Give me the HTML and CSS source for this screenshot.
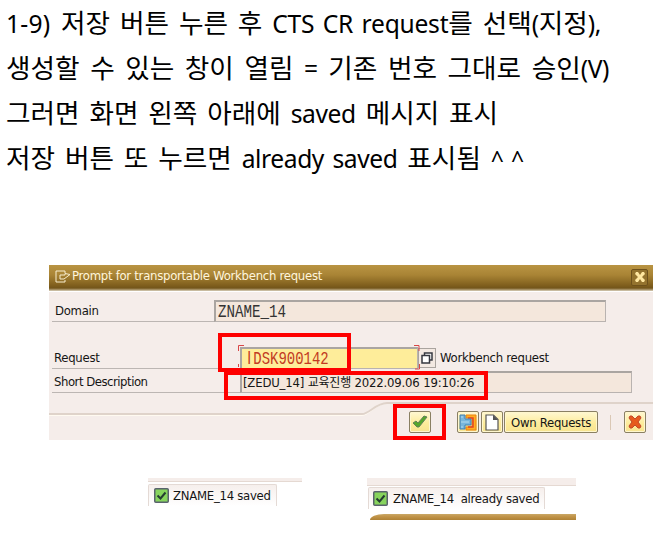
FILE: index.html
```html
<!DOCTYPE html>
<html lang="ko">
<head>
<meta charset="utf-8">
<title>CTS request</title>
<link rel="stylesheet" href="styles.css">
</head>
<body>
<main class="page">
  <section class="notes">
    <p><span class="lat num">1-9)</span> 저장 버튼 누른 후 <span class="lat caps">CTS CR request</span>를 선택<span class="lat">(</span>지정<span class="lat">),</span></p>
    <p class="wide">생성할 수 있는 창이 열림 <span class="lat">=</span> 기존 번호 그대로 승인<span class="lat">(V)</span></p>
    <p>그러면 화면 왼쪽 아래에 <span class="lat">saved</span> 메시지 표시</p>
    <p>저장 버튼 또 누르면 <span class="lat">already saved</span> 표시됨 <span class="lat carets">^^</span></p>
  </section>

  <section class="dialog">
    <header class="titlebar">
      <svg class="title-icon" width="16" height="13" viewBox="0 0 16 13"><path d="M10 3V1H1v11h9v-2M5 5h5V3.500L15 4.500 9 9H5z" fill="none" stroke="#f7edce"/></svg>
      <h1>Prompt for transportable Workbench request</h1>
      <button class="close"><svg width="10" height="10" viewBox="0 0 10 10"><path d="M1 0h2l2 3 2-3h2l1 2-3 3 3 3-1 2H7L5 7l-2 3H1L0 8l3-3-3-3z" fill="#ffe7a0"/></svg></button>
    </header>
    <div class="form">
      <div class="row domain"><label><span>Domain</span></label><div class="field"><span class="mono">ZNAME_14</span></div></div>
      <div class="row request"><label><span>Request</span></label><div class="field yellow"><span class="mono"><span class="bar">I</span>DSK900142</span></div>
        <button class="match"><svg width="12" height="12" viewBox="0 0 12 12"><path d="M3.500 3V1H11v7H9M1 3.500h7.500V11H1z" fill="#fff" stroke="#363840" stroke-width="1.500"/></svg></button><span class="side">Workbench request</span></div>
      <div class="row desc"><label><span>Short Description</span></label><div class="field"><span class="desc-text">[ZEDU_14] <span class="ko">교육진행</span> 2022.09.06 19:10:26</span></div></div>
    </div>
    <footer class="toolbar">
      <svg class="edge" width="604" height="16" viewBox="0 0 604 16"><path d="M0 14.500h313c7 0 14-12 25-12h266" fill="none" stroke="#fffaf0"/><path d="M0 13h313c7 0 14-11 25-11h266" fill="none" stroke="#dfd3ca" stroke-width="1.800"/></svg>
      <div class="buttons">
        <button class="btn ok"><svg width="16" height="14" viewBox="0 0 16 14"><path d="M1 8l3-2 2 2 6-7 3 1-8 10H5z" fill="#55a62c" stroke="#62805a"/></svg></button>
        <button class="btn tree"><svg width="18" height="17" viewBox="0 0 18 17"><path d="M7 1h10v15H7v-3h6V4H7z" fill="#ffae20" stroke="#e98213"/><path d="M9 4h5v9H9" fill="none" stroke="#e24425" stroke-width="1.500"/><path d="M1 1h5v4h6v6H6v4H1z" fill="#77b6dd" stroke="#437eac"/><path d="M2 8h8M2 3h2M2 13h2" stroke="#b6dced"/></svg></button>
        <button class="btn new"><svg width="14" height="17" viewBox="0 0 14 17"><path d="M1 1h7.500L13 5.500V16H1z" fill="#fff" stroke="#555" stroke-width="1.200"/><path d="M8 1l5 5H8z" fill="#555"/></svg></button>
        <button class="btn own"><span>Own Requests</span></button>
        <i class="divider"></i>
        <button class="btn cancel"><svg width="14" height="14" viewBox="0 0 14 14"><path d="M2 1h2l3 3 3-3h2l1 2-3 4 3 4-1 2h-2l-3-3-3 3H2l-1-2 3-4-3-4z" fill="#e65a1d" stroke="#c1472b"/></svg></button>
      </div>
    </footer>
    <svg class="brackets" width="182" height="26" viewBox="0 0 182 26"><path d="M.5 6V.5H6M.5 19v3M176 .5h5V6M181.500 19v5H177" fill="none" stroke="#d84747"/></svg>
    <i class="mark mark-request"></i>
    <i class="mark mark-desc"></i>
    <i class="mark mark-ok"></i>
  </section>

  <section class="statuses">
    <div class="status first">
      <div class="strip"></div>
      <div class="tab"><svg width="15" height="15" viewBox="0 0 15 15"><rect x=".75" y=".75" width="13.500" height="13.500" rx="1" fill="#87d45d" stroke="#59636d" stroke-width="1.500"/><path d="M3.500 7.500l3 3 5-6" fill="none" stroke="#253d32" stroke-width="2"/></svg><span>ZNAME_14 saved</span></div>
    </div>
    <div class="status second">
      <div class="strip"></div>
      <div class="tab"><svg width="15" height="15" viewBox="0 0 15 15"><rect x=".75" y=".75" width="13.500" height="13.500" rx="1" fill="#87d45d" stroke="#59636d" stroke-width="1.500"/><path d="M3.500 7.500l3 3 5-6" fill="none" stroke="#253d32" stroke-width="2"/></svg><span>ZNAME_14&nbsp; already saved</span></div>
      <div class="gold"></div>
    </div>
  </section>
</main>
</body>
</html>
```
FILE: styles.css
```css
* { box-sizing: border-box; }
body { margin: 0; background: #fff; color: #000; font-family: "DejaVu Sans Condensed", "DejaVu Sans", "Noto Sans CJK KR", sans-serif; font-stretch: condensed; overflow: hidden; }
.page { width: 667px; height: 534px; display: flow-root; }
button { padding: 0; margin: 0; font: inherit; letter-spacing: inherit; color: inherit; display: flex; align-items: center; justify-content: center; }
svg { display: block; flex: none; }

.notes { height: 266px; margin-top: -1px; padding: 0 0 0 6px; }
.notes p { margin: 0; height: 45px; font: 26.67px/45px "Noto Sans CJK KR", sans-serif; white-space: nowrap; word-spacing: 2.4px; }
.notes .wide { word-spacing: 3.1px; }
.lat { font-family: "Noto Sans", sans-serif; font-size: 24.6px; letter-spacing: -.4px; }
.num { letter-spacing: .2px; margin-right: 1px; }
.caps { letter-spacing: -.25px; }
.carets { letter-spacing: 7px; font-size: 23px; }

.dialog { position: relative; width: 604px; height: 175px; margin-left: 49px; background: #f5edea; color: #151515; font-size: 13px; letter-spacing: -.28px; }
.titlebar { display: flex; align-items: center; height: 26px; padding: 0 5px 3px 6px; background: linear-gradient(#b99443, #a98435 40%, #81601e 80%, #73551a 92%, #b3a078); border-bottom: 1px solid #c8bba0; }
.titlebar h1 { margin: 0 auto 0 1px; font-size: 13px; font-weight: 400; color: #fff5dc; line-height: 20px; white-space: nowrap; }
.close { width: 17px; height: 17px; background: #94732e; border: 1px solid #6e511b; border-radius: 2px; margin-top: 2px; }
.form { height: 110px; padding-top: 8px; border-top: 1px solid #fff; }
.row { display: flex; height: 22px; }
.row label { display: flex; align-items: center; height: 22px; border-bottom: 1px solid #bcb6b3; margin-left: 3px; padding-left: 2px; white-space: nowrap; }
.domain label { width: 162px; padding-left: 3px; }
.request { margin-top: 25px; }
.request label, .desc label { width: 188px; }
.desc { margin-top: 2px; }
.desc label { letter-spacing: -.48px; }
.field { height: 22px; display: flex; align-items: center; border: 1px solid #b9b3b0; border-top: 2px solid #aaa5a1; border-left: 2px solid #aaa5a1; background: #f4e7dc; padding-left: 2px; white-space: nowrap; }
.domain .field { width: 392px; }
.yellow { width: 178px; background: #feed9a; padding-left: 3px; }
.desc .field { width: 392px; padding-left: 1px; letter-spacing: -.19px; }
.mono { display: block; font: 18px/18px "Liberation Mono", monospace; letter-spacing: 0; transform: scaleX(.787); transform-origin: left; color: #333; }
.yellow .mono { color: #c23a22; transform: scaleX(.775); }
.bar { display: inline-block; width: 10.8px; text-align: center; font-family: "Liberation Sans", sans-serif; }
.match { width: 18px; height: 20px; margin: 1px 0 0 0; border: 1px solid #aaa49f; background: #f3e9e2; }
.side { margin-left: 4px; line-height: 22px; }
.ko { font-family: "Noto Sans CJK KR", sans-serif; font-size: 12px; line-height: 12px; }

.toolbar { height: 39px; }
.edge { height: 16px; margin-bottom: -6px; }
.buttons { display: flex; align-items: center; height: 22px; padding-left: 360px; }
.btn { width: 22px; height: 22px; border: 1px solid #8a8063; border-radius: 2px; background: linear-gradient(#fff8d2, #fdec9c 55%, #f8e490); box-shadow: inset 0 0 0 1px #fff7ce; white-space: nowrap; }
.tree { margin-left: 26px; }
.new { margin-left: 2px; }
.own { width: 94px; margin-left: 1px; }
.divider { width: 1px; height: 15px; margin: 0 13px 0 12px; background: #dac8b5; }
.brackets { position: absolute; left: 189px; top: 80px; }
.mark { position: absolute; border: 4px solid #fe0000; }
.mark-request { left: 169px; top: 68px; width: 133px; height: 39px; }
.mark-desc { left: 175px; top: 106px; width: 264px; height: 29px; }
.mark-ok { left: 344px; top: 139px; width: 53px; height: 36px; }

.statuses { display: flex; padding-top: 38px; font-size: 13px; letter-spacing: -.27px; color: #151515; }
.first { width: 154px; margin-left: 148px; }
.first .strip { height: 4px; background: #f5edea; border-bottom: 1px solid #e5d9d2; }
.tab { display: flex; align-items: center; gap: 4px; border: 1px solid #e4dad5; border-bottom: 0; border-radius: 2px 2px 0 0; background: linear-gradient(#f6efec, #fff); white-space: nowrap; padding-left: 5px; }
.first .tab { width: 129px; height: 22px; margin-top: 2px; }
.second { width: 220px; margin-left: 54px; }
.second .strip { height: 8px; margin-left: 11px; background: #f5edea; border-bottom: 1px solid #e5d9d2; }
.second .tab { width: 177px; height: 22px; margin: 1px 0 0 12px; padding-left: 4px; gap: 5px; }
.gold { height: 6px; margin: 5px 0 0 14px; border-radius: 14px 0 0 0 / 6px 0 0 0; background: linear-gradient(#c9a867, #c2954a 40%, #ae8135); }
```
